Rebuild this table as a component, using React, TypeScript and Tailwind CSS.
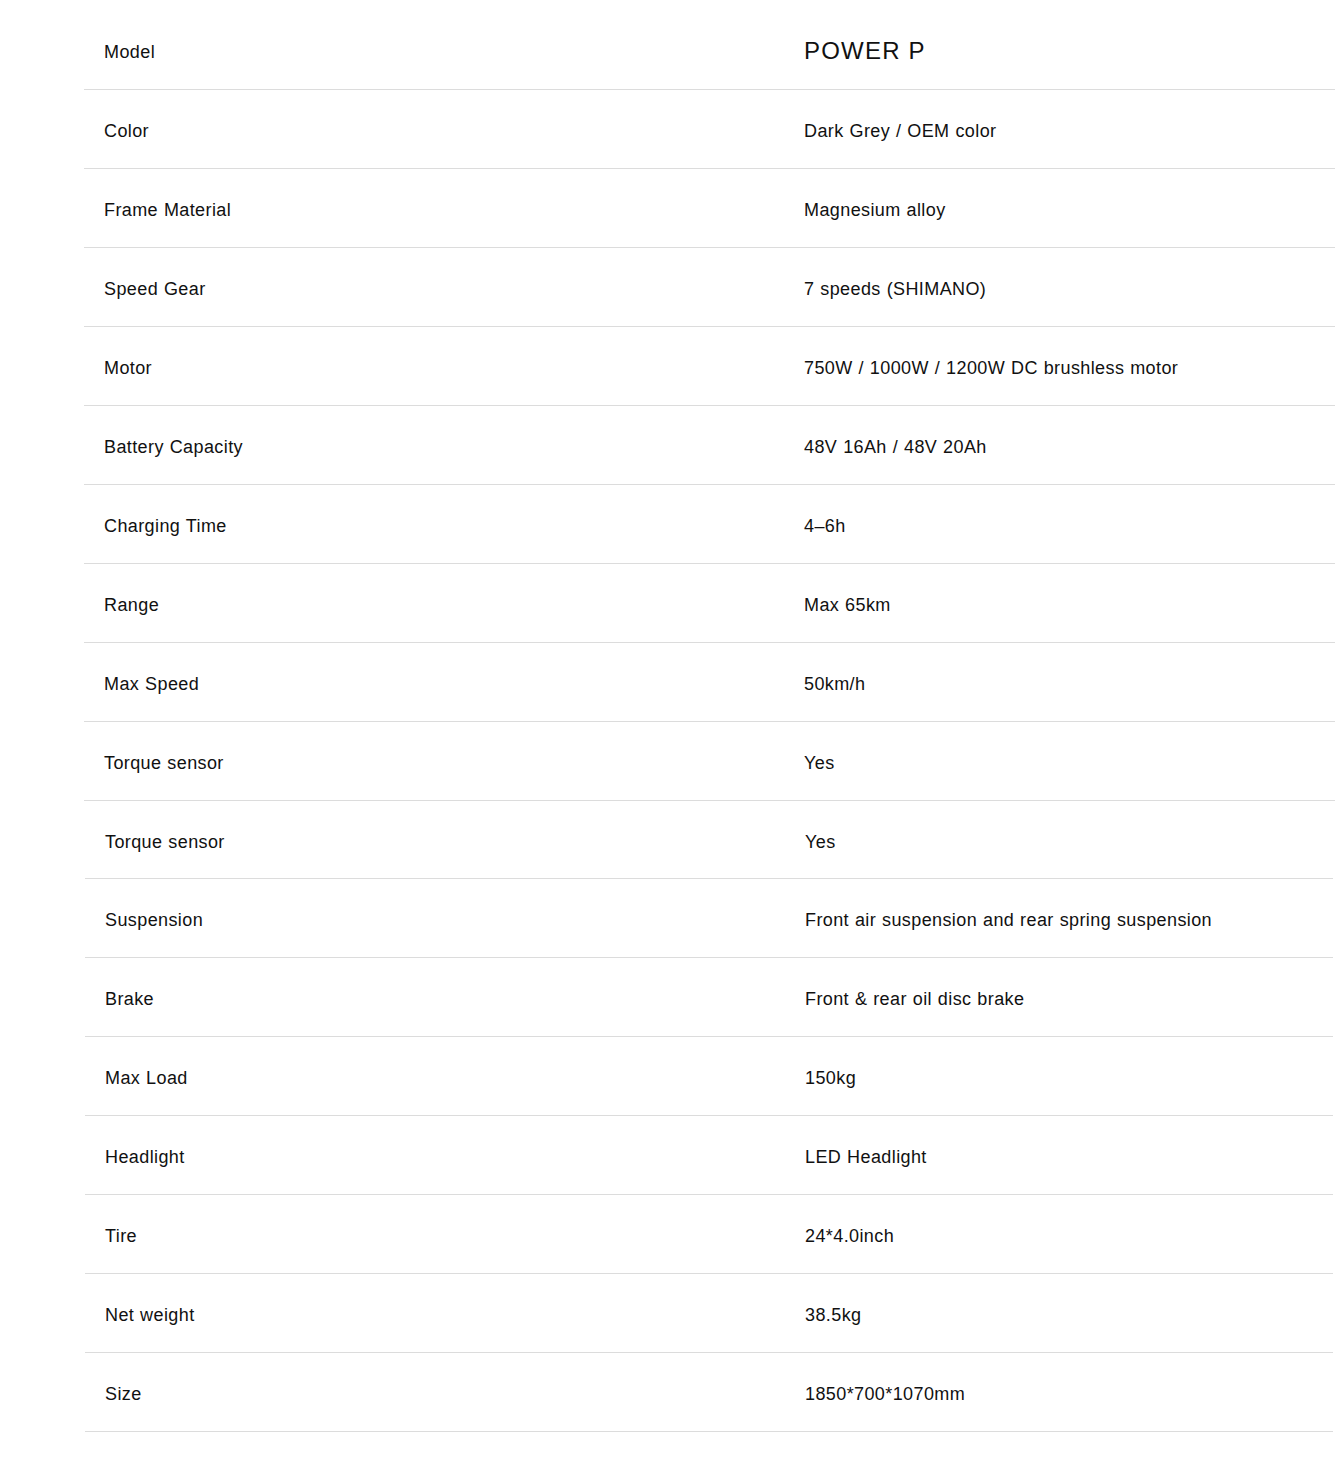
import React from "react";

const rows1: [string, string][] = [
  ["Color", "Dark Grey / OEM color"],
  ["Frame Material", "Magnesium alloy"],
  ["Speed Gear", "7 speeds (SHIMANO)"],
  ["Motor", "750W / 1000W / 1200W DC brushless motor"],
  ["Battery Capacity", "48V 16Ah / 48V 20Ah"],
  ["Charging Time", "4–6h"],
  ["Range", "Max 65km"],
  ["Max Speed", "50km/h"],
  ["Torque sensor", "Yes"],
];

const rows2: [string, string][] = [
  ["Suspension", "Front air suspension and rear spring suspension"],
  ["Brake", "Front & rear oil disc brake"],
  ["Max Load", "150kg"],
  ["Headlight", "LED Headlight"],
  ["Tire", "24*4.0inch"],
  ["Net weight", "38.5kg"],
  ["Size", "1850*700*1070mm"],
];

function Row({ label, value, big, h = "h-[79px]" }: { label: string; value: string; big?: boolean; h?: string }) {
  return (
    <div className={`flex items-center ${h} border-b border-[#dcdcdc] pt-[5px]`}>
      <div className="w-[700px] pl-5 text-[18px] tracking-[0.4px] [word-spacing:0.5px] text-[#111]">{label}</div>
      <div
        className={`flex-1 pl-5 ${
          big ? "text-[24px] tracking-[1.2px] -mt-[3px]" : "text-[18px] tracking-[0.4px] [word-spacing:0.5px]"
        } text-[#111]`}
      >
        {value}
      </div>
    </div>
  );
}

export default function App() {
  return (
    <div className="min-h-[1463px] bg-white pt-[11px]" style={{ fontFamily: '"Liberation Sans", Arial, sans-serif' }}>
      <div className="ml-[84px] w-[1251px]">
        <Row label="Model" value="POWER P" big />
        {rows1.map(([l, v]) => (
          <Row key={l + v} label={l} value={v} />
        ))}
      </div>
      <div className="ml-[85px] w-[1248px]">
        <Row label="Torque sensor" value="Yes" h="h-[78px]" />
        {rows2.map(([l, v]) => (
          <Row key={l + v} label={l} value={v} />
        ))}
      </div>
    </div>
  );
}
